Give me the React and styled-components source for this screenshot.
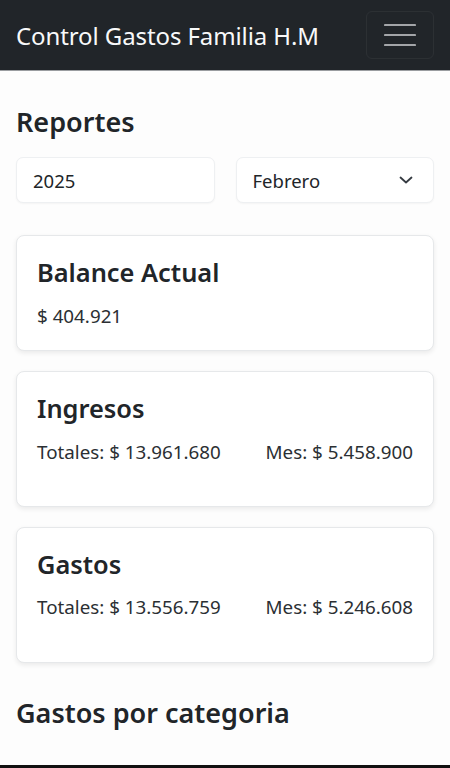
import styled, { createGlobalStyle } from 'styled-components'

const GlobalStyle = createGlobalStyle`
  * { box-sizing: border-box; }
  html, body { margin: 0; padding: 0; background: #fdfdfd; }
  body {
    font-family: "Noto Sans", "Open Sans", sans-serif;
    color: #212529;
    height: 768px;
    overflow: hidden;
  }
`

const Navbar = styled.nav`
  height: 71px;
  background: #212529;
  border-bottom: 1px solid #9a9da0;
  display: flex;
  align-items: center;
  justify-content: space-between;
  padding: 0 16px 0 16px;
`

const Brand = styled.a`
  color: #f8f9fa;
  font-size: 24px;
  text-decoration: none;
  letter-spacing: -0.1px;
`

const Toggler = styled.button`
  width: 68px;
  height: 48px;
  background: transparent;
  border: 1px solid rgba(255, 255, 255, 0.05);
  border-radius: 6px;
  display: flex;
  align-items: center;
  justify-content: center;
  padding: 0;
`

const Main = styled.main`
  padding: 35px 16px 0;
`

const Heading = styled.h3`
  font-size: 27px;
  font-weight: 560;
  margin: ${p => p.$top || 0}px 0 ${p => p.$gap || 0}px;
  line-height: 1.2;
`

const Filters = styled.div`
  display: grid;
  grid-template-columns: 1fr 1fr;
  gap: 21px;
  margin-bottom: 32px;
`

const Field = styled.div`
  height: 46px;
  background: #fff;
  border: 1px solid #eef0f2;
  border-radius: 7px;
  box-shadow: 0 1px 2px rgba(0, 0, 0, 0.04);
  display: flex;
  align-items: center;
  justify-content: space-between;
  padding: 0 20px 0 16px;
  font-size: 18.5px;
  color: #212529;
`

const Card = styled.section`
  background: #fff;
  border: 1px solid #e6e8ea;
  border-radius: 8px;
  box-shadow: 0 2px 5px rgba(0, 0, 0, 0.08);
  padding: 20px 20px ${p => p.$bottom || 20}px;
  margin-bottom: 20px;
`

const CardTitle = styled.h4`
  font-size: 25.4px;
  font-weight: 560;
  margin: 0 0 12px;
  line-height: 1.32;
`

const Row = styled.div`
  display: flex;
  justify-content: space-between;
  font-size: 18.8px;
  line-height: 1.5;
  color: #2b2f33;
`

const Chevron = () => (
  <svg width="14" height="10" viewBox="0 0 14 10" fill="none">
    <path d="M1.5 2.5 7 7.5l5.5-5" stroke="#343a40" strokeWidth="1.8" strokeLinecap="round" strokeLinejoin="round" />
  </svg>
)

const Burger = () => (
  <svg width="32" height="24" viewBox="0 0 32 24">
    <path d="M1 2h30M1 12h30M1 22h30" stroke="#a3a5a8" strokeWidth="2.2" strokeLinecap="round" />
  </svg>
)

const BottomEdge = styled.div`
  position: fixed;
  left: 0;
  right: 0;
  bottom: 0;
  height: 3px;
  background: #111;
`

export default function App() {
  return (
    <>
      <GlobalStyle />
      <Navbar>
        <Brand href="#">Control Gastos Familia H.M</Brand>
        <Toggler aria-label="menu"><Burger /></Toggler>
      </Navbar>
      <Main>
        <Heading $gap={19}>Reportes</Heading>
        <Filters>
          <Field>2025</Field>
          <Field>Febrero <Chevron /></Field>
        </Filters>

        <Card>
          <CardTitle>Balance Actual</CardTitle>
          <Row><span>$ 404.921</span></Row>
        </Card>

        <Card $bottom={40}>
          <CardTitle>Ingresos</CardTitle>
          <Row>
            <span>Totales: $ 13.961.680</span>
            <span>Mes: $ 5.458.900</span>
          </Row>
        </Card>

        <Card $bottom={40}>
          <CardTitle>Gastos</CardTitle>
          <Row>
            <span>Totales: $ 13.556.759</span>
            <span>Mes: $ 5.246.608</span>
          </Row>
        </Card>

        <Heading $top={34}>Gastos por categoria</Heading>
      </Main>
      <BottomEdge />
    </>
  )
}
